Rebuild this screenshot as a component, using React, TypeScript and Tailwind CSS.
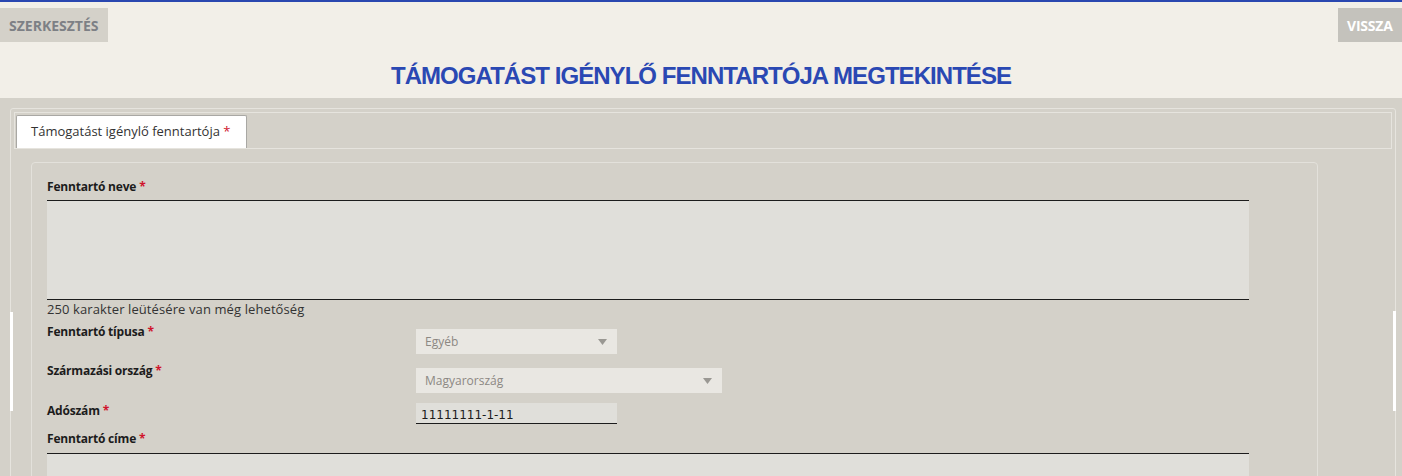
import React from "react";

const Star = () => <span className="text-[#d0142c]">{" "}*</span>;

const Label = ({ children }: { children: React.ReactNode }) => (
  <div className="text-[12px] font-bold leading-[16px] text-[#1c1c1c] tracking-[-0.2px]">
    {children}
    <Star />
  </div>
);

const Arrow = () => (
  <svg width="9" height="6" viewBox="0 0 9 6" className="shrink-0">
    <path d="M0 0 L9 0 L4.5 6 Z" fill="#9a9893" />
  </svg>
);

export default function App() {
  return (
    <div
      className="w-[1402px] h-[476px] overflow-hidden bg-[#d4d1c9] text-[#222]"
      style={{ fontFamily: '"Open Sans", "Noto Sans", sans-serif' }}
    >
      {/* Header */}
      <div className="bg-[#f2efe8] border-t-2 border-[#2a47b0] h-[98px] flex flex-col">
        <div className="flex justify-between mt-[6px]">
          <div className="bg-[#d4d1c9] h-[34px] w-[108px] flex items-center pl-[9px] text-[14px] font-bold text-[#7d8085]">
            SZERKESZTÉS
          </div>
          <div className="bg-[#c4c2bc] h-[34px] w-[64px] flex items-center pl-[9px] text-[14px] font-bold text-white tracking-[-0.2px]">
            VISSZA
          </div>
        </div>
        <div
          className="text-center mt-[20px] text-[24px] leading-[28px] font-bold text-[#2a48b3] tracking-[-0.95px]"
          style={{ fontFamily: '"Liberation Sans", Arial, sans-serif' }}
        >
          TÁMOGATÁST IGÉNYLŐ FENNTARTÓJA MEGTEKINTÉSE
        </div>
      </div>

      {/* Body */}
      <div className="pt-[10px] pl-[10px] pr-[6px] relative">
        <div className="border border-[#e6e4de] rounded-[3px] h-[400px] relative">
          {/* Tab bar */}
          <div className="mx-[3px] mt-[3px] border border-[#e6e4de] h-[37px] flex items-end pl-[1px]">
            <div className="bg-white border border-b-0 border-[#a9a8a4] rounded-t-[2px] w-[231px] h-[33px] flex items-center pl-[14px] text-[13px] text-[#333]">
              <span>
                Támogatást igénylő fenntartója
                <Star />
              </span>
            </div>
          </div>

          {/* Card */}
          <div className="ml-[20px] mr-[77px] mt-[13px] border border-[#e3e1db] rounded-[4px] h-[330px] pt-[16px] pl-[15px]">
            <Label>Fenntartó neve</Label>
            <div className="mt-[5px] w-[1202px] h-[100px] bg-[#e0dfda] border-t border-b border-[#1c1c1c]" />
            <div className="text-[13px] leading-[18px] text-[#333] tracking-[0.1px]">
              250 karakter leütésére van még lehetőség
            </div>

            <div className="flex h-[43px]">
              <div className="w-[369px] pt-[6px]">
                <Label>Fenntartó típusa</Label>
              </div>
              <div className="w-[201px] h-[25px] mt-[11px] bg-[#e9e7e2] flex items-center justify-between pl-[9px] pr-[10px] text-[12px] text-[#8c8883]">
                Egyéb
                <Arrow />
              </div>
            </div>

            <div className="flex h-[40px]">
              <div className="w-[369px] pt-[2px]">
                <Label>Származási ország</Label>
              </div>
              <div className="w-[306px] h-[25px] mt-[7px] bg-[#e9e7e2] flex items-center justify-between pl-[9px] pr-[10px] text-[12px] text-[#8c8883]">
                Magyarország
                <Arrow />
              </div>
            </div>

            <div className="flex h-[30px]">
              <div className="w-[369px] pt-[2px]">
                <Label>Adószám</Label>
              </div>
              <div
                className="w-[201px] h-[21px] mt-[2px] bg-[#e0dfda] border-b border-[#1c1c1c] flex items-end pl-[5px] text-[12px] leading-[16px] text-[#1c1c1c]"
                style={{ fontFamily: '"DejaVu Sans", Verdana, sans-serif' }}
              >
                11111111-1-11
              </div>
            </div>

            <Label>Fenntartó címe</Label>
            <div className="mt-[6px] w-[1202px] h-[40px] bg-[#e0dfda] border-t border-[#1c1c1c]" />
          </div>

          {/* white side markers */}
          <div className="absolute left-[-1px] top-[203px] w-[3px] h-[99px] bg-white" />
          <div className="absolute right-[-1px] top-[202px] w-[3px] h-[100px] bg-white" />
        </div>
      </div>
    </div>
  );
}
